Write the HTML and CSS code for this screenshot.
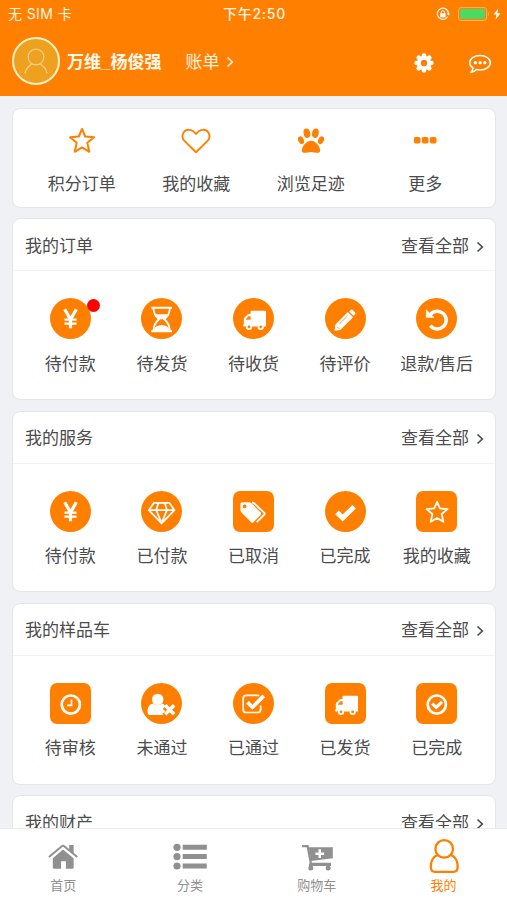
FILE: index.html
```html
<!DOCTYPE html>
<html lang="zh-CN">
<head>
<meta charset="utf-8">
<meta name="viewport" content="width=device-width, initial-scale=1">
<title>我的</title>
<link rel="stylesheet" href="styles.css">
</head>
<body>
<svg class="defs" aria-hidden="true">
  <symbol id="chevron" viewBox="0 0 8 12"><path d="M1.5 1.5 6.3 6 1.5 10.5" fill="none" stroke="currentColor" stroke-width="1.7"/></symbol>
  <symbol id="star" viewBox="0 0 28 28"><path d="M14 2.5 17.2 10 26 10.8 19.3 16.3 21.3 25.3 14 20.9 6.7 25.3 8.7 16.3 2 10.8 10.8 10Z" fill="none" stroke="currentColor" stroke-width="2" stroke-linejoin="round"/></symbol>
  <symbol id="yen" viewBox="0 0 41 41"><path d="M14.7 11.2 20.5 21.5 26.3 11.2M20.500 20.500V30.300" fill="none" stroke="#fff" stroke-width="3.200"/><path d="M14.500 21.700H26.500M14.500 25.600H26.500" stroke="#fff" stroke-width="2.200"/></symbol>
  <symbol id="truck" viewBox="0 0 41 41">
    <path fill="#fff" d="M18.500 12.700H32a1 1 0 0 1 1 1V28.600H31.200A3.700 3.700 0 0 0 24.200 28.600H19.500A3.700 3.700 0 0 0 12.400 28.600H10.200V26.500H10.800V21.200Q10.800 20.300 11.500 19.600L14.600 16.600Q15.200 16 16 16H17.500V13.700a1 1 0 0 1 1-1Z"/>
    <path d="M13 21.700V20.900L15.600 18.300H17.600V21.700Z" fill="#ff8000"/>
    <circle cx="16" cy="28.800" r="2.300" fill="#ff8000" stroke="#fff" stroke-width="1.800"/>
    <circle cx="27.700" cy="28.800" r="2.300" fill="#ff8000" stroke="#fff" stroke-width="1.800"/>
  </symbol>
</svg>

<div class="app">
  <header class="top">
    <div class="status">
      <span class="carrier">无 SIM 卡</span>
      <span class="time">下午2:50</span>
      <span class="indicators">
        <svg class="lock" viewBox="0 0 14 14"><path d="M11.600 9.800A5.600 5.600 0 1 1 12.500 6.800" fill="none" stroke="#fff" stroke-width="1.100"/><path d="M10.600 6.200H14L12.400 8.800Z" fill="#fff"/><path d="M4.200 6.300H9.600V10.300H4.200Z" fill="#fff"/><path d="M5.300 6.600V5.300a1.600 1.600 0 0 1 3.200 0V6.600" fill="none" stroke="#fff"/></svg>
        <svg class="battery" viewBox="0 0 32 14"><rect x=".6" y=".6" width="28" height="12.800" rx="2.400" fill="none" stroke="#ffb060"/><rect x="2.100" y="2.100" width="25" height="9.800" rx="1" fill="#4bd964"/><path d="M30 4.800Q32 7 30 9.200Z" fill="#ffb060"/></svg>
        <svg class="bolt" viewBox="0 0 8 12"><path d="M5.200.5.500 6.600H3.500L2.600 11.500 7.500 5.200H4.400Z" fill="#fff"/></svg>
      </span>
    </div>
    <div class="profile">
      <svg class="avatar" viewBox="0 0 48 48"><circle cx="24" cy="24" r="23" fill="#eea01f" stroke="#fff0c8" stroke-width="2"/><g fill="none" stroke="#f9cf83" stroke-width="1.300"><circle cx="24" cy="20" r="7.900"/><path d="M20.100 27Q14.300 30 13 36.500M27.900 27Q33.700 30 35 36.500"/></g></svg>
      <strong class="name">万维_杨俊强</strong>
      <a class="bill">账单<svg class="chev"><use href="#chevron"/></svg></a>
      <svg class="gear" viewBox="0 0 20 20"><g stroke="#fff" stroke-width="4.600" stroke-linecap="round"><path d="M10 2.600V17.400M2.600 10H17.400M4.700 4.700 15.300 15.300M15.300 4.700 4.700 15.300"/></g><circle cx="10" cy="10" r="7.200" fill="#fff"/><circle cx="10" cy="10" r="3.200" fill="#ff8000"/></svg>
      <svg class="chat" viewBox="0 0 24 20"><path d="M12 1.500c5.800 0 10.300 3.200 10.300 7.200s-4.500 7.200-10.300 7.200q-1.900 0-3.500-.4Q6 18.100 2.900 18.400 4.800 16.700 5 14 1.700 12 1.700 8.700C1.700 4.700 6.200 1.500 12 1.500Z" fill="none" stroke="#fff" stroke-width="1.500" stroke-linejoin="round"/><circle cx="7.400" cy="8.700" r="1.650" fill="#fff"/><circle cx="12.100" cy="8.700" r="1.650" fill="#fff"/><circle cx="16.800" cy="8.700" r="1.650" fill="#fff"/></svg>
    </div>
  </header>

  <main class="content">
    <section class="card shortcuts">
      <a class="shortcut"><svg viewBox="0 0 30 30"><use href="#star" x="1" y=".5" width="28" height="28"/></svg><span>积分订单</span></a>
      <a class="shortcut"><svg viewBox="0 0 30 30"><path d="M15 26.200 3.900 15.400C1.100 12.500 1.100 9 2.500 6.700 4.900 2.900 10.900 2.400 15 8 19.100 2.400 25.100 2.900 27.500 6.700 28.900 9 28.900 12.500 26.100 15.400Z" fill="none" stroke="currentColor" stroke-width="1.900" stroke-linejoin="round"/></svg><span>我的收藏</span></a>
      <a class="shortcut"><svg viewBox="0 0 30 30" fill="currentColor"><ellipse cx="10.900" cy="7.200" rx="3.300" ry="4.700" transform="rotate(-12 10.900 7.200)"/><ellipse cx="19.400" cy="7.200" rx="3.300" ry="4.700" transform="rotate(12 19.400 7.200)"/><ellipse cx="5" cy="14.300" rx="2.800" ry="4" transform="rotate(-22 5 14.300)"/><ellipse cx="25" cy="14.300" rx="2.800" ry="4" transform="rotate(22 25 14.300)"/><path d="M15 14.800C20 14.800 24.200 21 24.200 24.400 24.200 28.500 18.300 25.900 15 25.900S5.800 28.500 5.800 24.400C5.800 21 10 14.800 15 14.800Z"/></svg><span>浏览足迹</span></a>
      <a class="shortcut"><svg viewBox="0 0 30 30" fill="currentColor"><rect x="3.900" y="11" width="6.600" height="6.500" rx="1.700"/><rect x="11.900" y="11" width="6.600" height="6.500" rx="1.700"/><rect x="19.900" y="11" width="6.600" height="6.500" rx="1.700"/></svg><span>更多</span></a>
    </section>

    <section class="card">
      <div class="head"><h2>我的订单</h2><a class="all">查看全部<svg class="chev"><use href="#chevron"/></svg></a></div>
      <div class="items">
        <a class="item"><span class="tile round"><svg><use href="#yen"/></svg><i class="dot"></i></span><span>待付款</span></a>
        <a class="item"><span class="tile round"><svg viewBox="0 0 41 41"><path d="M10.300 9.800H31M10.300 33.200H31" stroke="#fff" stroke-width="2"/><path d="M12.500 10C12.500 16.500 15.500 19.300 18 21.300 15.500 23.400 12.500 26.500 12.500 33M28.800 10C28.800 16.500 25.800 19.300 23.300 21.300 25.800 23.400 28.800 26.500 28.800 33" fill="none" stroke="#fff" stroke-width="1.800"/><path d="M14.500 16.300H26.800Q25.500 19 23 21.300H18.300Q15.800 19 14.500 16.300ZM13 33V31Q14.500 27.500 20.700 27 26.900 27.500 28.400 31V33Z" fill="#fff"/></svg></span><span>待发货</span></a>
        <a class="item"><span class="tile round"><svg><use href="#truck"/></svg></span><span>待收货</span></a>
        <a class="item"><span class="tile round"><svg viewBox="0 0 41 41"><path d="M22.800 14.900 27.100 19.200 15 31.300 10.300 32.100 11 27Z" fill="#fff" stroke="#fff" stroke-width="1.400" stroke-linejoin="round"/><path d="M24.200 13.500 25.700 12Q26.700 11 27.800 12.100L30 14.400Q31 15.400 30 16.400L28.500 17.800Z" fill="#fff"/><path d="M14.200 26.200 22.600 17.800M12 28.600 14.200 30.800" stroke="#ff8000" stroke-width=".8"/></svg></span><span>待评价</span></a>
        <a class="item"><span class="tile round"><svg viewBox="0 0 41 41"><path d="M14.200 16.600A8.900 8.900 0 1 1 14.300 27.600" fill="none" stroke="#fff" stroke-width="3.500"/><path d="M10.300 11.900V19.500H18Z" fill="#fff" stroke="#fff" stroke-width=".6"/></svg></span><span>退款/售后</span></a>
      </div>
    </section>

    <section class="card">
      <div class="head"><h2>我的服务</h2><a class="all">查看全部<svg class="chev"><use href="#chevron"/></svg></a></div>
      <div class="items">
        <a class="item"><span class="tile round"><svg><use href="#yen"/></svg></span><span>待付款</span></a>
        <a class="item"><span class="tile round"><svg viewBox="0 0 41 41"><path d="M13 11.800H28.300L33.500 19.200 20.600 32.300 7.800 19.200ZM7.800 19.200H33.500M17.500 11.800 15.200 19.200 20.600 32 26 19.200 23.800 11.800" fill="none" stroke="#fff" stroke-width="1.700" stroke-linejoin="round"/></svg></span><span>已付款</span></a>
        <a class="item"><span class="tile"><svg viewBox="0 0 41 41"><path fill="#fff" fill-rule="evenodd" d="M9 11.200H15.500Q17.400 11.200 18.500 12.300L27.700 21.600Q28.800 22.800 27.700 23.900L20.400 31.200Q19.300 32.300 18.200 31.200L8.700 21.700Q7.400 20.400 7.400 18.600V12.800Q7.400 11.200 9 11.200ZM11.600 13.500a1.900 1.900 0 1 0 0 3.800a1.900 1.900 0 1 0 0-3.800Z"/><path d="M19 11.600Q20.600 11.600 21.600 12.700L31.300 21.900Q32.100 22.800 31.300 23.700L23.700 31.200" fill="none" stroke="#fff" stroke-width="1.800"/></svg></span><span>已取消</span></a>
        <a class="item"><span class="tile round"><svg viewBox="0 0 41 41"><path d="M12 21.400 17.700 27 29.100 15.700" fill="none" stroke="#fff" stroke-width="5"/></svg></span><span>已完成</span></a>
        <a class="item"><span class="tile"><svg viewBox="0 0 41 41" color="#fff"><use href="#star" x="8.800" y="8.700" width="24.500" height="24.500"/></svg></span><span>我的收藏</span></a>
      </div>
    </section>

    <section class="card">
      <div class="head"><h2>我的样品车</h2><a class="all">查看全部<svg class="chev"><use href="#chevron"/></svg></a></div>
      <div class="items">
        <a class="item"><span class="tile"><svg viewBox="0 0 41 41" fill="none" stroke="#fff"><circle cx="20.800" cy="21.600" r="9.100" stroke-width="2.700"/><path d="M21.500 16.500V22.300H17.200" stroke-width="1.700"/></svg></span><span>待审核</span></a>
        <a class="item"><span class="tile round"><svg viewBox="0 0 41 41"><circle cx="16.700" cy="16.400" r="5.700" fill="#fff"/><path d="M12.300 20.600Q16.700 24 21.200 20.600 23.400 21 24.200 23.500L21.800 25.800 24.200 28.300 21.300 31.100 22.400 32.100H9.700Q6.500 32.100 6.500 28.700C6.500 24.300 8.700 20.700 12.300 20.600Z" fill="#fff"/><path d="M24.200 22.300 33.100 31.200M33.100 22.300 24.200 31.200" stroke="#fff" stroke-width="3.500"/></svg></span><span>未通过</span></a>
        <a class="item"><span class="tile round"><svg viewBox="0 0 41 41" fill="none" stroke="#fff"><path d="M26.200 12.700Q25.500 12.400 24.700 12.400H13.300Q10.200 12.400 10.200 15.500V26.400Q10.200 29.500 13.300 29.500H24.500Q27.600 29.500 27.600 26.400V22.500" stroke-width="1.700"/><path d="M14.500 19.400 19.400 24.200 30.800 12.900" stroke-width="3.700"/></svg></span><span>已通过</span></a>
        <a class="item"><span class="tile"><svg><use href="#truck"/></svg></span><span>已发货</span></a>
        <a class="item"><span class="tile"><svg viewBox="0 0 41 41" fill="none" stroke="#fff"><circle cx="20.800" cy="21.600" r="9.100" stroke-width="2.700"/><path d="M16.200 20.600 20.200 24.300 26 18.800" stroke-width="3.200"/></svg></span><span>已完成</span></a>
      </div>
    </section>

    <section class="card">
      <div class="head"><h2>我的财产</h2><a class="all">查看全部<svg class="chev"><use href="#chevron"/></svg></a></div>
    </section>
  </main>

  <nav class="tabs">
    <a class="tab"><svg viewBox="0 0 34 34" fill="currentColor"><path d="M17 10.500 27.600 19.300V28.600Q27.600 29.700 26.500 29.700H19.900V22.200H15.100V29.700H7.900Q6.800 29.700 6.800 28.600V19.300Z"/><path d="M3 18 15.800 7.200Q17 6.300 18.200 7.200L31.300 18" fill="none" stroke="currentColor" stroke-width="2"/><path d="M23.200 5.900H27.600V15L23.200 11.300Z"/></svg><span>首页</span></a>
    <a class="tab"><svg viewBox="0 0 34 34" fill="currentColor"><circle cx="4" cy="8.300" r="3.600"/><circle cx="4" cy="17.600" r="3.600"/><circle cx="4" cy="27" r="3.600"/><path d="M9.700 5.800H33.800V10.800H9.700ZM9.700 15.100H33.800V20.100H9.700ZM9.700 24.500H33.800V29.500H9.700Z"/></svg><span>分类</span></a>
    <a class="tab"><svg viewBox="0 0 34 34" fill="currentColor"><path fill-rule="evenodd" d="M8.800 8.300H32.800V19.200L11.100 22.100ZM18.500 10.300V13.400H15.400V15.900H18.500V19H21V15.900H24.100V13.400H21V10.300Z"/><path d="M2 7.100H7.600L11 24.900H31" fill="none" stroke="currentColor" stroke-width="2.300"/><path d="M9 24.500H31V27H9Z"/><circle cx="10.800" cy="29" r="2.500"/><circle cx="28.200" cy="29" r="2.500"/></svg><span>购物车</span></a>
    <a class="tab active"><svg viewBox="0 0 34 34" fill="none" stroke="currentColor" stroke-width="2.300"><circle cx="17.200" cy="9.900" r="8.800"/><path d="M10.700 15.800C6 17.500 3.800 23 3.800 27.800Q3.800 32.900 8 32.900H26.500Q30.700 32.900 30.700 27.800C30.700 23 28.500 17.500 23.700 15.800"/></svg><span>我的</span></a>
  </nav>
</div>
</body>
</html>
```
FILE: styles.css
```css
* { box-sizing: border-box; }
body {
  margin: 0;
  background: #f0f1f4;
  color: #4c4c4c;
  font-family: "Liberation Sans", "Noto Sans CJK SC", sans-serif;
  font-size: 17px;
}
svg { display: block; overflow: visible; flex: none; }
.defs { position: absolute; width: 0; height: 0; }
.app { height: 900px; display: flex; flex-direction: column; overflow: hidden; }

.top { flex: none; height: 96px; background: #ff8000; color: #fff3e0; }
.status {
  height: 28px;
  padding: 0 6px 0 8px;
  display: grid;
  grid-template-columns: 1fr auto 1fr;
  align-items: center;
  font-family: Inter, "Noto Sans CJK SC", sans-serif;
  font-size: 14px;
  line-height: 20px;
}
.carrier { letter-spacing: .4px; }
.time { font-weight: 500; letter-spacing: .7px; }
.indicators { display: flex; justify-content: flex-end; align-items: center; }
.lock { width: 14px; height: 14px; margin-right: 8px; }
.battery { width: 32px; height: 14px; margin-right: 3px; }
.bolt { width: 8px; height: 12px; }

.profile { height: 66px; padding: 0 15px 0 12px; display: flex; align-items: center; }
.avatar { width: 48px; height: 48px; }
.name { margin-left: 7px; padding-top: 3px; font-weight: 700; line-height: 26px; color: #fff7ea; }
.bill { margin-left: 24px; padding-top: 3px; display: flex; align-items: center; line-height: 26px; }
.bill .chev { margin-left: 7px; margin-top: -2px; }
.chev { width: 8px; height: 12px; }
.gear { width: 20px; height: 20px; margin-left: auto; margin-top: 4px; }
.chat { width: 24px; height: 20px; margin-left: 34px; margin-top: 5px; }

.content {
  flex: 1;
  min-height: 0;
  overflow: hidden;
  padding: 12.300px 11px 0 12px;
  display: flex;
  flex-direction: column;
  gap: 10.500px;
}
.card {
  flex: none;
  height: 181.800px;
  background: #fff;
  border: 1px solid #e4e5e8;
  border-radius: 8px;
}
.shortcuts {
  height: 99.500px;
  padding: 17px 12.500px 0 11.500px;
  display: grid;
  grid-template-columns: repeat(4, 1fr);
}
.shortcut { display: flex; flex-direction: column; align-items: center; line-height: 26px; }
.shortcut svg { width: 30px; height: 30px; margin-bottom: 16px; color: #ff8000; }

.head {
  height: 52px;
  padding: 4px 11px 0 12px;
  display: flex;
  justify-content: space-between;
  align-items: center;
  border-bottom: 1px solid #f1f1f1;
}
h2 { margin: 0; font-size: 17px; font-weight: 400; line-height: 26px; }
.all { display: flex; align-items: center; line-height: 26px; }
.all .chev { margin-left: 7px; }

.items { padding: 27px 12.500px 0 11.500px; display: grid; grid-template-columns: repeat(5, 1fr); }
.item { display: flex; flex-direction: column; align-items: center; gap: 12.500px; line-height: 26px; white-space: nowrap; }
.tile { position: relative; width: 41px; height: 41px; border-radius: 7px; background: #ff8000; }
.tile svg { width: 41px; height: 41px; }
.round { border-radius: 50%; }
.dot { position: absolute; top: 1px; right: -9px; width: 13px; height: 13px; border-radius: 50%; background: #f00; }

.tabs {
  flex: none;
  height: 72px;
  border-top: 1px solid #e9e9eb;
  background: #fff;
  display: grid;
  grid-template-columns: repeat(4, 1fr);
  color: #909090;
  font-size: 13px;
}
.tab { padding-top: 10px; display: flex; flex-direction: column; align-items: center; line-height: 20px; }
.tab svg { width: 34px; height: 34px; margin-bottom: 3px; }
.active { color: #ff8000; }
```
